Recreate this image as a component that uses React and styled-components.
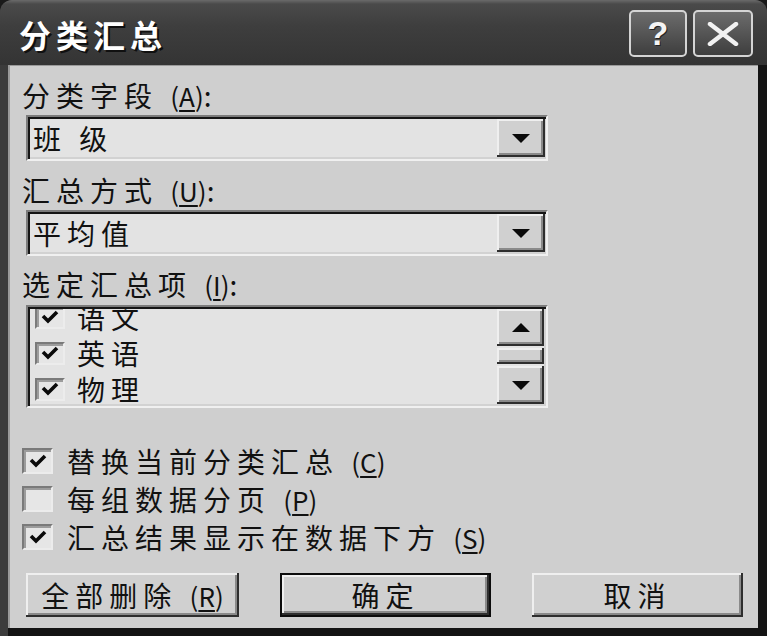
import React from "react";
import styled, { createGlobalStyle } from "styled-components";

const GlobalStyle = createGlobalStyle`
  html, body {
    margin: 0;
    padding: 0;
    background: #1a1a1a;
  }
  body {
    font-family: "Noto Sans CJK SC", "Noto Sans", sans-serif;
  }
`;

const Window = styled.div`
  width: 767px;
  height: 636px;
  display: flex;
  flex-direction: column;
  border-radius: 12px 12px 0 0;
  overflow: hidden;
  background: #2a2a2a;
`;

const TitleBar = styled.div`
  height: 65px;
  flex-shrink: 0;
  box-sizing: border-box;
  display: flex;
  align-items: center;
  justify-content: space-between;
  padding: 2px 14px 0 19px;
  background: linear-gradient(180deg, #6a6a6a 0, #4a4a4a 4px, #3e3e3e 40%, #343434 100%);
`;

const Title = styled.div`
  color: #ffffff;
  font-size: 32px;
  font-weight: 700;
  text-shadow: 2px 2px 0 #101010;
  letter-spacing: 5px;
`;

const Caps = styled.div`
  display: flex;
  gap: 6px;
`;

const CapButton = styled.div`
  width: ${(p) => p.$w}px;
  height: 47px;
  box-sizing: border-box;
  border: 2px solid #d4d4d4;
  border-radius: 5px;
  background: linear-gradient(180deg, #6c6c6c, #3e3e3e);
  display: flex;
  align-items: center;
  justify-content: center;
  color: #f4f4f4;
  font-family: "Liberation Sans", Arial, sans-serif;
  font-weight: 700;
  font-size: 34px;
  text-shadow: 1px 1px 0 #222;
`;

const Frame = styled.div`
  flex: 1;
  display: flex;
  padding: 0 9px 8px 8px;
  background: linear-gradient(90deg, #3c3c3c 0 8px, #141414 8px);
`;

const Body = styled.div`
  flex: 1;
  display: flex;
  flex-direction: column;
  box-sizing: border-box;
  padding: 15px 15px 11px 14px;
  background: #cfcfcf;
  box-shadow: inset 2px 1px 0 #9a9a9a;
  color: #111;
`;

const Label = styled.div`
  font-size: 28px;
  line-height: 30px;
  height: 30px;
  letter-spacing: 6px;
  margin-top: ${(p) => p.$top || 0}px;
  white-space: nowrap;
`;

const Key = styled.span`
  letter-spacing: 0;
  font-size: 26px;
  u {
    text-underline-offset: 3px;
  }
`;

const Sunken = styled.div`
  width: 522px;
  box-sizing: border-box;
  margin-left: 4px;
  background: #e3e3e3;
  border: 2px solid;
  border-color: #7c7c7c #f0f0f0 #f0f0f0 #7c7c7c;
  box-shadow: inset 2px 2px 0 #151515, inset -2px -2px 0 #d2d2d2;
`;

const Combo = styled(Sunken)`
  height: 46px;
  margin-top: 5px;
  display: flex;
  align-items: stretch;
  padding: 2px 1px 2px 5px;
`;

const ComboText = styled.div`
  flex: 1;
  display: flex;
  align-items: center;
  font-size: 28px;
  letter-spacing: 6px;
  white-space: pre;
`;

const Raised = styled.div`
  box-sizing: border-box;
  background: #d0d0d0;
  box-shadow: inset -2px -2px 0 #2e2e2e, inset 2px 2px 0 #efefef,
    inset -4px -4px 0 #8a8a8a;
  display: flex;
  align-items: center;
  justify-content: center;
`;

const DropButton = styled(Raised)`
  width: 48px;
`;

const Arrow = styled.div`
  width: 0;
  height: 0;
  border-left: 9px solid transparent;
  border-right: 9px solid transparent;
  ${(p) =>
    p.$up
      ? "border-bottom: 9px solid #0a0a0a;"
      : "border-top: 9px solid #0a0a0a;"}
`;

const ListBox = styled(Sunken)`
  height: 103px;
  margin-top: 6px;
  display: flex;
  padding: 2px;
  overflow: hidden;
`;

const ListItems = styled.div`
  flex: 1;
  overflow: hidden;
  padding-left: 5px;
`;

const ListScroll = styled.div`
  margin-top: -10px;
`;

const ListRow = styled.div`
  height: 36px;
  line-height: 36px;
  display: flex;
  align-items: center;
  gap: 12px;
  font-size: 28px;
  letter-spacing: 6px;
`;

const CheckBox = styled.div`
  width: ${(p) => p.$w}px;
  height: ${(p) => p.$h}px;
  flex-shrink: 0;
  box-sizing: border-box;
  background: #e6e6e6;
  border: 2px solid;
  border-color: #7a7a7a #ececec #ececec #7a7a7a;
  box-shadow: inset 2px 2px 0 #9c9c9c;
  display: flex;
  align-items: center;
  justify-content: center;
`;

const ScrollBar = styled.div`
  width: 47px;
  display: flex;
  flex-direction: column;
`;

const ScrollButton = styled(Raised)`
  height: ${(p) => p.$h}px;
`;

const Thumb = styled(Raised)`
  height: 16px;
  margin: 2px 0;
`;

const Options = styled.div`
  margin-top: 34px;
  display: flex;
  flex-direction: column;
`;

const OptionRow = styled.div`
  height: 38px;
  display: flex;
  align-items: center;
  gap: 14px;
  font-size: 28px;
  letter-spacing: 6px;
  white-space: nowrap;
`;

const ButtonRow = styled.div`
  margin-top: 17px;
  display: flex;
  justify-content: space-between;
  padding-left: 4px;
`;

const Button = styled(Raised)`
  width: ${(p) => p.$w}px;
  height: 44px;
  font-size: 28px;
  letter-spacing: 6px;
  white-space: pre;
  border: ${(p) => (p.$default ? "2px solid #0c0c0c" : "none")};
`;

const Check = () => (
  <svg width="20" height="16" viewBox="0 0 20 16">
    <polyline
      points="3,7 8,12 17,3"
      fill="none"
      stroke="#0a0a0a"
      strokeWidth="3.6"
    />
  </svg>
);

const Mnemonic = ({ k }) => (
  <Key>
    (<u>{k}</u>)
  </Key>
);

const items = ["语文", "英语", "物理"];

const options = [
  { text: "替换当前分类汇总", key: "C", on: true },
  { text: "每组数据分页", key: "P", on: false },
  { text: "汇总结果显示在数据下方", key: "S", on: true },
];

const App = () => {
  return (
    <>
      <GlobalStyle />
      <Window>
        <TitleBar>
          <Title>分类汇总</Title>
          <Caps>
            <CapButton $w={58}>?</CapButton>
            <CapButton $w={60}>
              <svg width="34" height="24" viewBox="0 0 34 24">
                <path
                  d="M4 2 L30 22 M30 2 L4 22"
                  stroke="#f2f2f2"
                  strokeWidth="4.5"
                  strokeLinecap="round"
                />
              </svg>
            </CapButton>
          </Caps>
        </TitleBar>
        <Frame>
          <Body>
            <Label>
              分类字段 <Mnemonic k="A" />:
            </Label>
            <Combo>
              <ComboText>班 级</ComboText>
              <DropButton>
                <Arrow />
              </DropButton>
            </Combo>

            <Label $top={14}>
              汇总方式 <Mnemonic k="U" />:
            </Label>
            <Combo>
              <ComboText>平均值</ComboText>
              <DropButton>
                <Arrow />
              </DropButton>
            </Combo>

            <Label $top={13}>
              选定汇总项 <Mnemonic k="I" />:
            </Label>
            <ListBox>
              <ListItems>
                <ListScroll>
                  {items.map((it) => (
                    <ListRow key={it}>
                      <CheckBox $w={30} $h={23}>
                        <Check />
                      </CheckBox>
                      {it}
                    </ListRow>
                  ))}
                </ListScroll>
              </ListItems>
              <ScrollBar>
                <ScrollButton $h={37}>
                  <Arrow $up />
                </ScrollButton>
                <Thumb />
                <ScrollButton $h={38}>
                  <Arrow />
                </ScrollButton>
              </ScrollBar>
            </ListBox>

            <Options>
              {options.map((o) => (
                <OptionRow key={o.key}>
                  <CheckBox $w={31} $h={26}>
                    {o.on && <Check />}
                  </CheckBox>
                  <span>
                    {o.text} <Mnemonic k={o.key} />
                  </span>
                </OptionRow>
              ))}
            </Options>

            <ButtonRow>
              <Button $w={213}>
                <span>
                  全部删除 <Mnemonic k="R" />
                </span>
              </Button>
              <Button $w={211} $default>
                确定
              </Button>
              <Button $w={211}>取消</Button>
            </ButtonRow>
          </Body>
        </Frame>
      </Window>
    </>
  );
};

export default App;
